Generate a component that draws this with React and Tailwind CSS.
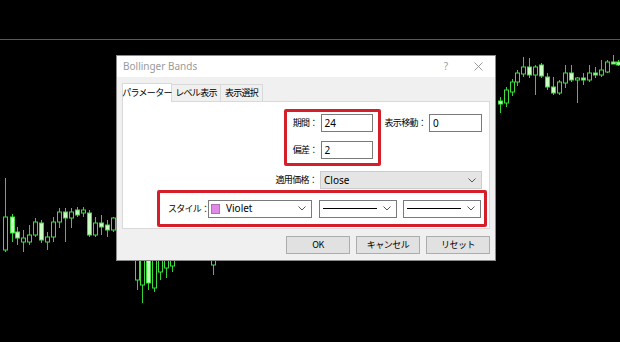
import React from "react";

const JP = { fontFamily: '"Noto Sans CJK JP", "Noto Sans", sans-serif' };
const UI = { fontFamily: '"Noto Sans", "Noto Sans CJK JP", sans-serif' };

const candles = [
  [5,178,252,217,250,0],[12,214,242,217,233,1],[17,227,245,232,238,1],[23,230,252,238,242,0],
  [29,225,245,235,242,0],[35,218,237,222,235,0],[41,220,243,223,240,1],[47,232,250,237,242,0],
  [53,217,242,222,237,0],[59,208,228,212,222,0],[65,208,242,212,218,1],[71,208,228,212,218,0],
  [77,207,217,210,215,1],[83,207,217,210,213,0],[89,210,237,213,235,1],[95,217,237,223,235,0],
  [101,215,235,223,227,1],[107,220,237,225,230,1],[113,217,232,218,230,0],
  [137,250,290,250,280,0],[142,250,303,255,285,0],[148,250,290,250,283,1],[154,250,292,255,288,0],
  [160,250,280,255,272,0],[166,250,278,250,268,0],[172,250,272,255,266,0],[213,250,275,250,265,0],
  [500,97,113,101,104,1],[506,87,107,90,103,0],[512,79,96,82,92,0],[517,70,86,73,82,0],
  [523,57,77,67,74,0],[529,58,78,67,75,1],[535,65,95,67,75,0],[541,63,78,65,76,1],
  [547,73,90,77,87,1],[553,77,95,87,93,1],[559,80,95,82,93,0],[565,65,88,73,83,0],
  [571,65,82,73,80,1],[577,77,103,78,80,0],[583,73,85,78,80,1],[589,65,82,73,80,0],
  [595,67,78,73,75,1],[601,60,77,70,75,0],[607,60,73,62,72,0],[613,55,64,62,64,1],[618,60,66,62,65,1],
];

function Chevron() {
  return (
    <svg width="8" height="5" viewBox="0 0 8 5" className="shrink-0">
      <path d="M0.5 0.5 L4 4 L7.5 0.5" fill="none" stroke="#555" strokeWidth="1" />
    </svg>
  );
}

function LineSelect({ w }) {
  return (
    <div className={`${w} h-[18px] border border-[#7a7a7a] bg-white flex items-center pl-[3px] pr-[5px] gap-[6px]`}>
      <div className="flex-1 h-px bg-black" />
      <Chevron />
    </div>
  );
}

function Field({ value, w = "w-[52px]" }) {
  return (
    <div className={`${w} h-[18px] border border-[#7a7a7a] bg-white flex items-center pl-[3px] text-[10px] text-black tracking-normal`} style={UI}>
      {value}
    </div>
  );
}

function Button({ children }) {
  return (
    <div className="w-[64px] h-[18px] border border-[#adadad] bg-[#e1e1e1] flex items-center justify-center text-[9px] tracking-[-0.06em] text-black" style={JP}>
      {children}
    </div>
  );
}

export default function App() {
  return (
    <div className="relative w-[620px] h-[342px] bg-black overflow-hidden">
      <svg className="absolute left-0 top-0" width="620" height="342">
        <line x1="0" y1="39.5" x2="620" y2="39.5" stroke="#5a5a5a" strokeWidth="1" />
        {candles.map(([x, wt, wb, bt, bb, f], i) => (
          <g key={i}>
            <line x1={x + 0.5} y1={wt} x2={x + 0.5} y2={wb} stroke="#32d232" strokeWidth="1" />
            <rect x={x - 1.5} y={bt} width="4" height={Math.max(1, bb - bt)} fill={f ? "#c8ffc0" : "#000"} stroke="#3ee03e" strokeWidth="1" />
          </g>
        ))}
      </svg>

      <div className="absolute left-[116px] top-[55px] w-[380px] h-[206px] bg-[#f0f0f0] border border-[#8a8a8a] flex flex-col">
        {/* title bar */}
        <div className="h-[21px] bg-white flex items-center pl-[6px] pr-[12px] shrink-0">
          <span className="text-[10px] text-[#9a9a9a]" style={UI}>Bollinger Bands</span>
          <span className="ml-auto text-[10px] text-[#9a9a9a] mr-[26px]" style={UI}>?</span>
          <svg width="9" height="9" viewBox="0 0 9 9">
            <path d="M0.5 0.5 L8.5 8.5 M8.5 0.5 L0.5 8.5" stroke="#9a9a9a" strokeWidth="1" />
          </svg>
        </div>

        <div className="flex-1 flex flex-col px-[5px] pt-[6px]">
          {/* tabs */}
          <div className="flex items-end h-[18px] text-[9px] tracking-[-0.08em] text-black whitespace-nowrap" style={JP}>
            <div className="w-[50px] h-[19px] bg-white border border-b-0 border-[#d9d9d9] flex items-center justify-center relative z-10 -mb-px">パラメーター</div>
            <div className="w-[49px] h-[17px] border-t border-r border-[#d9d9d9] flex items-center justify-center">レベル表示</div>
            <div className="w-[42px] h-[17px] border-t border-r border-[#d9d9d9] flex items-center justify-center">表示選択</div>
          </div>

          {/* panel */}
          <div className="h-[128px] bg-white border border-[#d9d9d9] flex flex-col text-[9px] tracking-[-0.08em] text-black whitespace-nowrap" style={JP}>
            <div className="flex justify-end pr-[7px] pt-[7px]">
              <div className="w-[97px] h-[57px] border-[3px] border-[#d41f2a] rounded-[2px] flex flex-col items-end pr-[5px] pt-[2px] gap-[9px]">
                <div className="flex items-center gap-[3px]">
                  <span>期間：</span>
                  <Field value="24" />
                </div>
                <div className="flex items-center gap-[3px]">
                  <span>偏差：</span>
                  <Field value="2" />
                </div>
              </div>
              <div className="flex items-center gap-[3px] ml-[4px] self-start mt-[5px]">
                <span>表示移動：</span>
                <Field value="0" w="w-[53px]" />
              </div>
            </div>

            <div className="flex justify-end items-center pr-[7px] mt-[5px] gap-[3px]">
              <span>適用価格：</span>
              <div className="w-[162px] h-[18px] border border-[#cccccc] bg-[#e5e5e5] flex items-center pl-[3px] pr-[5px] text-[10px] tracking-normal" style={UI}>
                <span className="flex-1">Close</span>
                <Chevron />
              </div>
            </div>

            <div className="ml-[34px] mr-[2px] mt-px h-[37px] border-[3px] border-[#d41f2a] rounded-[2px] flex items-center pl-[8px] pr-[2px]">
              <span className="w-[40px]">スタイル：</span>
              <div className="w-[104px] h-[18px] border border-[#7a7a7a] bg-white flex items-center pl-[2px] pr-[5px] text-[10px] tracking-normal" style={UI}>
                <div className="w-[9px] h-[10px] bg-[#e08ae8] border border-[#b070b8]" />
                <span className="flex-1 ml-[6px]">Violet</span>
                <Chevron />
              </div>
              <div className="ml-[7px]"><LineSelect w="w-[78px]" /></div>
              <div className="ml-[6px]"><LineSelect w="w-[78px]" /></div>
            </div>
          </div>

          {/* footer */}
          <div className="flex justify-end gap-[6px] pt-[7px]">
            <Button>OK</Button>
            <Button>キャンセル</Button>
            <Button>リセット</Button>
          </div>
        </div>
      </div>
    </div>
  );
}
